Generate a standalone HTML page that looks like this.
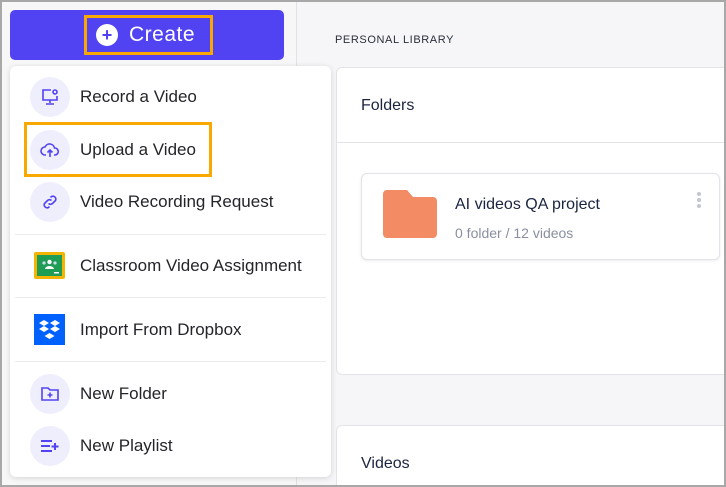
<!DOCTYPE html>
<html style="width:726px;height:487px;overflow:hidden"><head><meta charset="utf-8"><style>
*{box-sizing:border-box;margin:0;padding:0}
body{width:726px;height:487px;overflow:hidden;background:#f6f6f8;font-family:"Liberation Sans",sans-serif;position:relative}
.frame{position:absolute;left:0;top:0;width:726px;height:487px;border:2px solid #a8a8a8;z-index:10;pointer-events:none}
.side{position:absolute;left:0;top:0;width:297px;height:487px;background:#f7f7f8;border-right:1px solid #e2e2e6}
.btn{position:absolute;left:10px;top:10px;width:274px;height:50px;background:#5243f2;border-radius:5px}
.hl{position:absolute;border:3px solid #f9a800}
.btn .plus{position:absolute;left:86px;top:14px;width:22px;height:22px;border-radius:50%;background:#fff;color:#5243f2;font-size:18px;line-height:22px;text-align:center;font-weight:bold}
.btn .t{position:absolute;left:119px;top:12px;color:#fff;font-size:21px;line-height:26px;letter-spacing:0.5px}
.menu{position:absolute;left:10px;top:66px;width:321px;height:411px;background:#fff;border-radius:6px;box-shadow:0 1px 6px rgba(0,0,0,.15);z-index:2}
.item{position:absolute;left:70px;font-size:17px;color:#24242a}
.ic{position:absolute;left:20px;width:40px;height:40px;border-radius:50%;background:#efeefd}
.ic svg{position:absolute;left:10px;top:10px}
.div{position:absolute;left:5px;width:311px;height:1px;background:#ebebee}
.card{position:absolute;background:#fff;border:1px solid #e3e3ea;border-radius:6px;overflow:hidden}
</style></head><body>
<div class="side"></div>
<div class="btn"><div class="plus">+</div><div class="t">Create</div></div>
<div class="hl" style="left:84px;top:15px;width:129px;height:40px"></div>
<div class="menu">
 <div class="ic" style="top:11px"><svg width="20" height="20" viewBox="0 0 20 20" fill="none" stroke="#5243f2" stroke-width="1.6"><path d="M11 3H3v10h14V9"/><circle cx="15" cy="5" r="2"/><path d="M10 13v3M6 17h8"/></svg></div>
 <div class="item" style="top:21px">Record a Video</div>
 <div class="ic" style="top:64px"><svg width="20" height="20" viewBox="0 0 20 20" fill="none" stroke="#5243f2" stroke-width="1.6"><path d="M6 15H5a4 4 0 0 1 0-8 5 5 0 0 1 9.5 1A3.5 3.5 0 0 1 15 15h-1"/><path d="M10 17v-7M7.5 12.5 10 10l2.5 2.5"/></svg></div>
 <div class="item" style="top:74px">Upload a Video</div>
 <div class="ic" style="top:116px"><svg width="20" height="20" viewBox="0 0 20 20" fill="none" stroke="#5243f2" stroke-width="1.6"><path d="M8.5 11.5a3 3 0 0 0 4 0l3-3a3 3 0 0 0-4-4l-1 1"/><path d="M11.5 8.5a3 3 0 0 0-4 0l-3 3a3 3 0 0 0 4 4l1-1"/></svg></div>
 <div class="item" style="top:126px">Video Recording Request</div>
 <div class="div" style="top:168px"></div>
 <div style="position:absolute;left:24px;top:186px;width:31px;height:27px;background:#f5b400;border-radius:2px"><div style="position:absolute;left:3px;top:3px;width:25px;height:21px;background:#1f9d55"><svg width="25" height="21" viewBox="0 0 25 21"><circle cx="12.5" cy="7" r="2.2" fill="#fff"/><circle cx="7" cy="8" r="1.6" fill="#cde"/><circle cx="18" cy="8" r="1.6" fill="#cde"/><path d="M8 14a4.5 3 0 0 1 9 0z" fill="#fff"/><rect x="17" y="17" width="5" height="1.5" fill="#fff"/></svg></div></div>
 <div class="item" style="top:190px">Classroom Video Assignment</div>
 <div class="div" style="top:231px"></div>
 <div style="position:absolute;left:24px;top:248px;width:31px;height:31px;background:#0061fe"><svg width="31" height="31" viewBox="0 0 31 31" fill="#fff"><path d="M10 6l5 3-5 3-5-3zM21 6l5 3-5 3-5-3zM10 12l5 3-5 3-5-3zM21 12l5 3-5 3-5-3zM15.5 19l5 3-5 3-5-3z"/></svg></div>
 <div class="item" style="top:254px">Import From Dropbox</div>
 <div class="div" style="top:295px"></div>
 <div class="ic" style="top:308px"><svg width="20" height="20" viewBox="0 0 20 20" fill="none" stroke="#5243f2" stroke-width="1.6"><path d="M2 4h6l2 2h8v10H2z"/><path d="M10 8.5v5M7.5 11h5"/></svg></div>
 <div class="item" style="top:318px">New Folder</div>
 <div class="ic" style="top:360px"><svg width="20" height="20" viewBox="0 0 20 20" fill="none" stroke="#5243f2" stroke-width="2"><path d="M1 5h11M1 10h9M1 15h11M15 7v7M11.5 10.5h7"/></svg></div>
 <div class="item" style="top:370px">New Playlist</div>
</div>
<div class="hl" style="left:24px;top:122px;width:188px;height:55px;z-index:3"></div>
<div style="position:absolute;left:335px;top:34px;font-size:11px;letter-spacing:0.6px;color:#2a2f3a">PERSONAL LIBRARY</div>
<div class="card" style="left:336px;top:67px;width:400px;height:308px">
 <div style="position:absolute;left:24px;top:29px;font-size:16px;color:#1b2440">Folders</div>
 <div style="position:absolute;left:0;top:74px;width:100%;height:1px;background:#e3e3ea"></div>
 <div class="card" style="left:24px;top:105px;width:359px;height:87px;box-shadow:0 1px 3px rgba(0,0,0,.08)">
  <svg style="position:absolute;left:21px;top:16px" width="54" height="48" viewBox="0 0 54 48"><path d="M4 0h20l6 7h20a4 4 0 0 1 4 4v33a4 4 0 0 1-4 4H4a4 4 0 0 1-4-4V4a4 4 0 0 1 4-4z" fill="#f38b64"/></svg>
  <div style="position:absolute;left:93px;top:22px;font-size:16px;color:#1b2440">AI videos QA project</div>
  <div style="position:absolute;left:93px;top:51px;font-size:14px;color:#8a8fa0">0 folder / 12 videos</div>
  <div style="position:absolute;left:335px;top:18px;width:4px"><div style="width:4px;height:4px;border-radius:50%;background:#c3c6d0;margin-bottom:2px"></div><div style="width:4px;height:4px;border-radius:50%;background:#c3c6d0;margin-bottom:2px"></div><div style="width:4px;height:4px;border-radius:50%;background:#c3c6d0"></div></div>
 </div>
</div>
<div class="card" style="left:336px;top:425px;width:400px;height:62px;border-bottom:none;border-radius:6px 6px 0 0">
 <div style="position:absolute;left:24px;top:29px;font-size:16px;color:#1b2440">Videos</div>
</div>
<div class="frame"></div>
</body></html>
